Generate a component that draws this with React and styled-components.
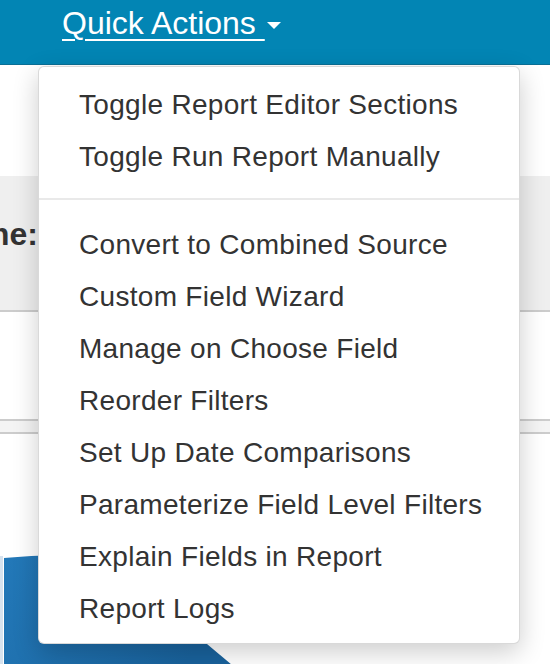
import React from "react"
import styled, { createGlobalStyle } from "styled-components"

const GlobalStyle = createGlobalStyle`
  html, body {
    margin: 0;
    padding: 0;
    background: #ffffff;
  }
  body {
    font-family: "Liberation Sans", Arial, sans-serif;
    color: #333333;
    overflow: hidden;
  }
`;

const Page = styled.div`
  position: relative;
  width: 550px;
  height: 664px;
  overflow: hidden;
  background: #ffffff;
`;

const Header = styled.div`
  display: flex;
  align-items: flex-start;
  height: 65px;
  padding-left: 62px;
  background: #0285b4;
  box-shadow: inset 0 -1px 0 #0a6f95;
  box-sizing: border-box;
`;

const Toggle = styled.a`
  display: flex;
  align-items: center;
  margin-top: 5px;
  color: #ffffff;
  font-size: 32px;
  line-height: 37px;
  text-decoration: underline;
  text-decoration-thickness: 2px;
  text-underline-offset: 5px;
  white-space: pre;
  cursor: pointer;
`;

const Caret = styled.span`
  display: inline-block;
  width: 0;
  height: 0;
  margin-left: 2px;
  margin-top: 4px;
  border-top: 7px solid #ffffff;
  border-left: 7px solid transparent;
  border-right: 7px solid transparent;
`;

const Content = styled.div`
  display: flex;
  flex-direction: column;
`;

const Spacer = styled.div`
  height: ${p => p.h}px;
`;

const FormBand = styled.div`
  display: flex;
  height: 134px;
  background: #efefef;
  border-bottom: 2px solid #cccccc;
`;

const LabelCell = styled.div`
  display: flex;
  justify-content: flex-end;
  width: 38px;
  height: 100%;
  padding-top: 40px;
  box-sizing: border-box;
  overflow: hidden;
  white-space: nowrap;
  font-size: 32px;
  font-weight: 700;
  color: #333333;
`;

const DoubleRule = styled.div`
  height: 11px;
  background: #f4f4f4;
  border-top: 2px solid #cccccc;
  border-bottom: 2px solid #cccccc;
`;

const ChartArea = styled.div`
  display: flex;
  height: 111px;
`;

const Menu = styled.div`
  position: absolute;
  top: 66px;
  left: 38px;
  width: 482px;
  box-sizing: border-box;
  padding: 10px 0;
  background: #ffffff;
  border: 1px solid rgba(0, 0, 0, 0.15);
  border-radius: 6px;
  box-shadow: 0 8px 26px rgba(0, 0, 0, 0.2);
`;

const Item = styled.div`
  padding: 8px 40px 4px;
  font-size: 28px;
  line-height: 40px;
  letter-spacing: 0.3px;
  color: #333333;
  white-space: nowrap;
  cursor: pointer;
`;

const Divider = styled.div`
  height: 0;
  margin: 17px 0;
  border-top: 2px solid #e9e9e9;
`;

const groupOne = ["Toggle Report Editor Sections", "Toggle Run Report Manually"];

const groupTwo = [
  "Convert to Combined Source",
  "Custom Field Wizard",
  "Manage on Choose Field",
  "Reorder Filters",
  "Set Up Date Comparisons",
  "Parameterize Field Level Filters",
  "Explain Fields in Report",
  "Report Logs",
];

const PieSlice = () => (
  <svg width="550" height="111" viewBox="0 0 550 111">
    <defs>
      <linearGradient id="slice" x1="0" y1="0" x2="1" y2="0.3">
        <stop offset="0" stopColor="#2379b9" />
        <stop offset="1" stopColor="#19629c" />
      </linearGradient>
    </defs>
    <rect x="0" y="2" width="3" height="109" fill="#d6e2ee" />
    <path d="M4,4 C40,1 80,0 100,0 L232,111 L4,111 Z" fill="url(#slice)" />
  </svg>
);

export default function App() {
  return (
    <Page>
      <GlobalStyle />
      <Header>
        <Toggle>
          {"Quick Actions "}
          <Caret />
        </Toggle>
      </Header>
      <Content>
        <Spacer h={111} />
        <FormBand>
          <LabelCell>Report Name:</LabelCell>
        </FormBand>
        <Spacer h={107} />
        <DoubleRule />
        <Spacer h={120} />
        <ChartArea>
          <PieSlice />
        </ChartArea>
      </Content>
      <Menu>
        {groupOne.map(label => (
          <Item key={label}>{label}</Item>
        ))}
        <Divider />
        {groupTwo.map(label => (
          <Item key={label}>{label}</Item>
        ))}
      </Menu>
    </Page>
  );
}
